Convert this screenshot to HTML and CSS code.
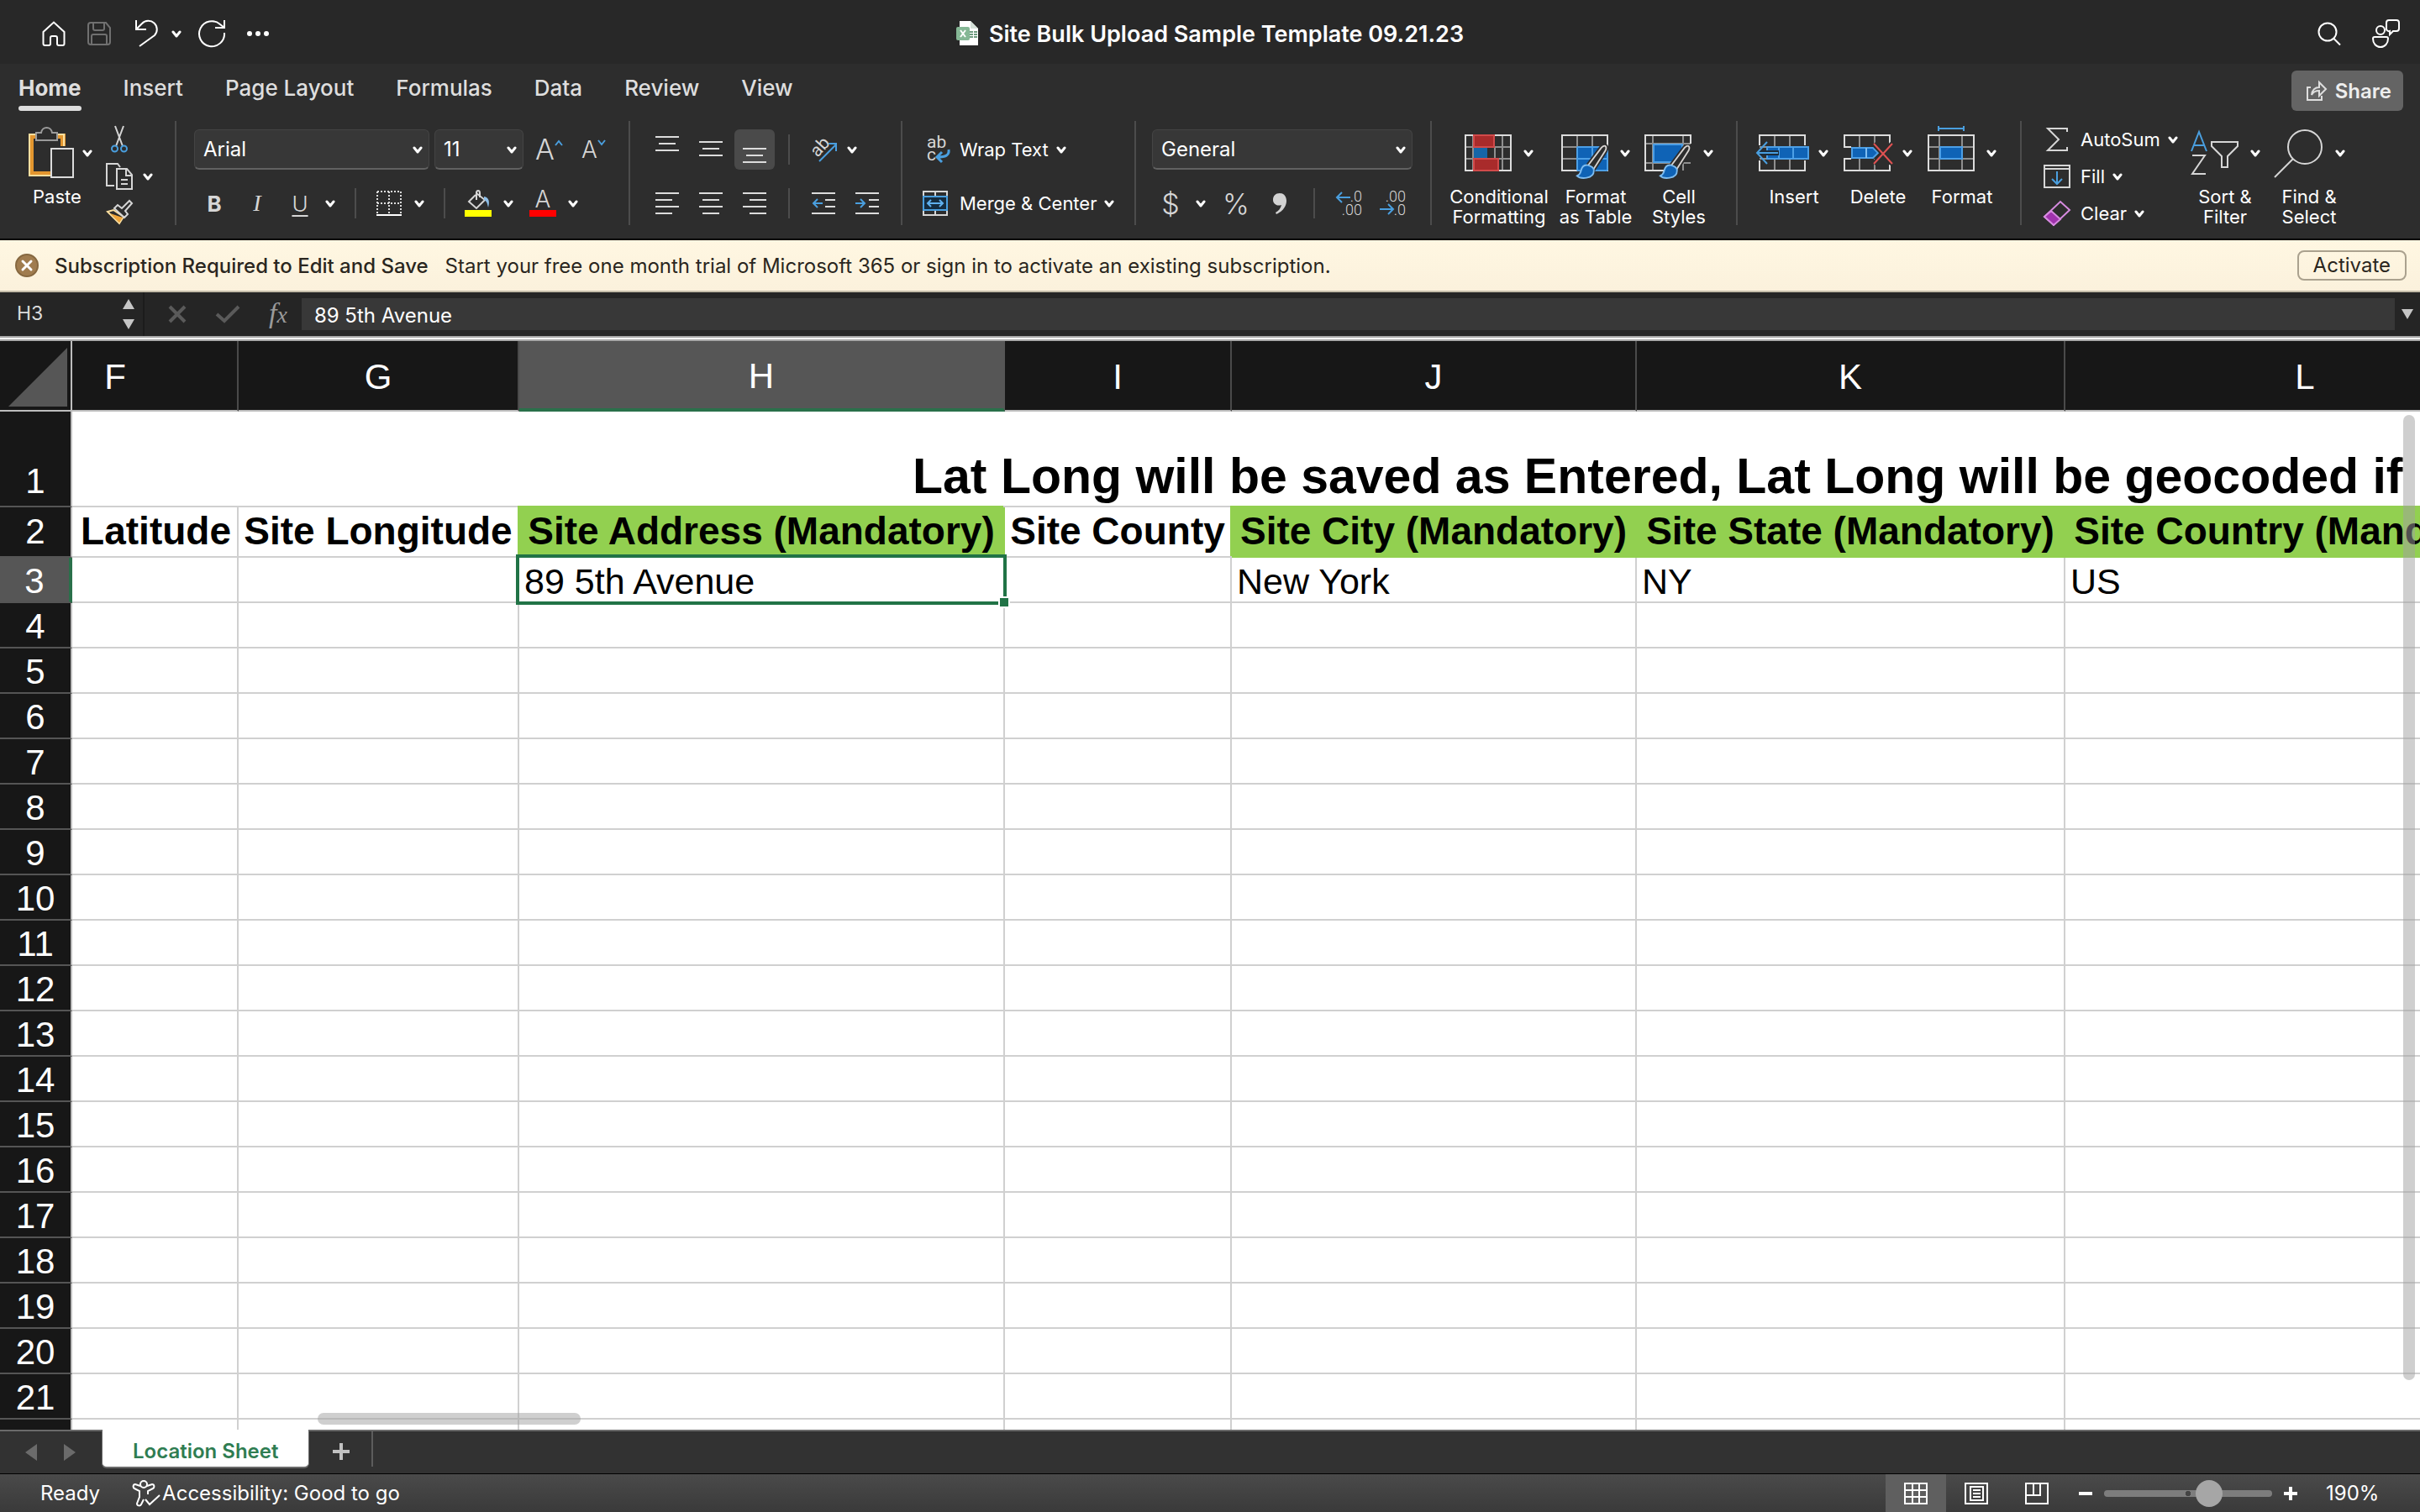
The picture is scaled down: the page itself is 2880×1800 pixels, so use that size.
FILE: index.html
```html
<!DOCTYPE html>
<html lang="en">
<head>
<meta charset="utf-8">
<title>Site Bulk Upload Sample Template 09.21.23</title>
<link rel="stylesheet" href="styles.css">
</head>
<body>
<svg class="defs" aria-hidden="true">
  <symbol id="chev" viewBox="0 0 12 9"><path d="M2 2l4 5 4-5" fill="none" stroke="#fff" stroke-width="3" stroke-linecap="round" stroke-linejoin="round"/></symbol>
  <symbol id="brush" viewBox="0 0 40 46">
    <path d="M37 2c2 2 1 4 0 6L21 33l-7-5L32 4c2-2 3-3 5-2Z" fill="#2d2d2d" stroke="#2d2d2d" stroke-width="6"/>
    <path d="M37 2c2 2 1 4 0 6L21 33l-7-5L32 4c2-2 3-3 5-2Z" fill="#2d2d2d" stroke="#d9d5d2" stroke-width="2"/>
    <path d="M14 27c-6-1-8 3-9 8-1 4-3 5-5 6 4 4 22 5 22-7 0-4-4-6-8-7Z" fill="#0f63b6" stroke="#7fbdf0" stroke-width="2"/>
  </symbol>
</svg>
<div class="app">
  <header class="titlebar">
    <div class="quick">
      <button aria-label="Home"><svg width="28" height="30" fill="none" stroke="#fff" stroke-width="2"><path d="M1.500 13 14 1.500 26.500 13V27a2 2 0 0 1-2 2H20a2 2 0 0 1-2-2v-7a2 2 0 0 0-2-2h-4a2 2 0 0 0-2 2v7a2 2 0 0 1-2 2H3.500a2 2 0 0 1-2-2Z"/></svg></button>
      <button aria-label="Save"><svg width="28" height="28" fill="none" stroke="#707070" stroke-width="2"><path d="M4 1h18l5 6v17a3 3 0 0 1-3 3H4a3 3 0 0 1-3-3V4a3 3 0 0 1 3-3ZM7 1v7a2 2 0 0 0 2 2h9a2 2 0 0 0 2-2V1M5 27V17a2 2 0 0 1 2-2h14a2 2 0 0 1 2 2v10"/></svg></button>
      <button class="undo" aria-label="Undo"><svg width="28" height="32" fill="none" stroke="#fff" stroke-width="2"><path d="M2 0v11h12M2 11l7-7a10 10 0 0 1 15 14L6 31"/></svg><svg class="chev"><use href="#chev"/></svg></button>
      <button class="redo" aria-label="Redo"><svg width="32" height="32" fill="none" stroke="#fff" stroke-width="2"><path d="M31 15a15 15 0 1 1-5-10l5 4M31 0v9H20"/></svg></button>
      <button aria-label="More"><svg width="28" height="8" fill="#fff"><circle cx="3" cy="4" r="3"/><circle cx="13" cy="4" r="3"/><circle cx="23" cy="4" r="3"/></svg></button>
    </div>
    <h1 class="doc"><svg width="27" height="30"><path d="M4 0h13l9 9v20H4Z" fill="#fff"/><path d="M17 0l9 9h-9Z" fill="#d5e0d8"/><path d="M16 12h4v2h-4Zm5 0h4v2h-4Zm-5 3h4v2h-4Zm5 0h4v2h-4Zm-5 3h4v2h-4Zm5 0h4v2h-4Z" fill="#6f9c80"/><rect y="7" width="16" height="16" rx="2" fill="#85b795"/><path d="M5 11l6 8M11 11l-6 8" stroke="#fff" stroke-width="2"/></svg>Site Bulk Upload Sample Template 09.21.23</h1>
    <div class="account">
      <button aria-label="Search"><svg width="28" height="28" fill="none" stroke="#fff" stroke-width="2"><circle cx="12" cy="12" r="10.500"/><path d="M19 19.500l8 8"/></svg></button>
      <button aria-label="Comments"><svg width="34" height="34" fill="none" stroke="#fff" stroke-width="2"><circle cx="11" cy="13" r="5"/><path d="M4 21h14a2 2 0 0 1 2 2c0 6-4 10-9 10s-9-4-9-10a2 2 0 0 1 2-2ZM21 1h9a3 3 0 0 1 3 3v7a3 3 0 0 1-3 3h-4l-4 4v-4a3 3 0 0 1-4-3V4a3 3 0 0 1 3-3Z"/></svg></button>
    </div>
  </header>

  <nav class="tabs">
    <a href="#home" class="on">Home</a><a href="#insert">Insert</a><a href="#layout">Page Layout</a><a href="#formulas">Formulas</a><a href="#data">Data</a><a href="#review">Review</a><a href="#view">View</a>
    <button class="share"><svg width="24" height="24" fill="none" stroke="#dedede" stroke-width="2"><path d="M5 8H1v15h17v-5M6 17c1-7 5-9 9-9V2l8 8-8 8v-6c-4 0-7 1-9 5Z"/></svg>Share</button>
  </nav>

  <div class="ribbon">
    <section class="group clipboard">
      <button class="big paste"><span class="pic"><svg width="54" height="62" fill="none"><path d="M13 11H3v45h23M34 11h7v12" stroke="#e3962f" stroke-width="6"/><path d="M13 9H1v49h25M34 9h8v14" stroke="#fbdf9f" stroke-width="2"/><path d="M9 7h6c1-8 12-8 13 0h6v9H9Z" fill="#2d2d2d" stroke="#9b9b9b" stroke-width="2"/><rect x="27" y="26" width="26" height="34" stroke="#dcdcdc" stroke-width="2" fill="#2d2d2d"/></svg><svg class="chev"><use href="#chev"/></svg></span><span class="name">Paste</span></button>
      <div class="stack">
        <button aria-label="Cut"><svg width="32" height="32" fill="none" stroke="#d6d6d6" stroke-width="2"><path d="M11 0l9 24M21 0l-9 24"/><circle cx="10.500" cy="27" r="3.500" stroke="#4a9fdf"/><circle cx="21.500" cy="27" r="3.500" stroke="#4a9fdf"/></svg></button>
        <button aria-label="Copy"><svg width="32" height="32" fill="none" stroke="#d6d6d6" stroke-width="2"><path d="M10 27H1V1h13l3 4M13 7h12l6 7v17H13ZM24 7v8h7M18 20h8M18 25h8"/></svg><svg class="chev"><use href="#chev"/></svg></button>
        <button aria-label="Format painter"><svg width="32" height="30" fill="none" stroke-width="2"><path d="M2 14l14 14 5-8L9 12Z" stroke="#fbdf9f" fill="#2d2d2d"/><path d="M5 16l11 11 4-6Z" fill="#f0a53a"/><path d="M10 10l4-4 5 4 9-9 3 3-8 9 3 4-4 4Z" stroke="#d6d6d6" fill="#2d2d2d"/></svg></button>
      </div>
    </section>

    <section class="group font">
      <div class="line">
        <span class="pick family"><select aria-label="Font"><option>Arial</option></select><svg class="chev"><use href="#chev"/></svg></span>
        <span class="pick size"><select aria-label="Font size"><option>11</option></select><svg class="chev"><use href="#chev"/></svg></span>
        <button class="grow" aria-label="Increase font size"><span class="a-big">A</span><svg width="10" height="8"><path d="M1 7l4-5 4 5" fill="none" stroke="#4a9fdf" stroke-width="2"/></svg></button>
        <button class="grow" aria-label="Decrease font size"><span class="a-mid">A</span><svg width="10" height="8"><path d="M1 1l4 5 4-5" fill="none" stroke="#4a9fdf" stroke-width="2"/></svg></button>
      </div>
      <div class="line tools">
        <button class="t bold">B</button>
        <button class="t italic">I</button>
        <span class="split"><button class="t under">U</button><svg class="chev"><use href="#chev"/></svg></span>
        <i class="bar"></i>
        <button class="split" aria-label="Borders"><svg width="32" height="32" fill="none" stroke="#dcdcdc" stroke-width="2"><path d="M2 2h28M2 16h28M2 2v26M16 2v26M30 2v26" stroke-dasharray="2 2"/><path d="M1 30h30" stroke="#fff"/></svg><svg class="chev"><use href="#chev"/></svg></button>
        <i class="bar"></i>
        <button class="split" aria-label="Fill color"><svg width="32" height="32" fill="none"><path d="M13 6L5 14l9 8 10-10L14 4v8" stroke="#d6d6d6" stroke-width="2"/><path d="M14 12V4c0-4 4-4 4 0v5" stroke="#d6d6d6" stroke-width="2"/><path d="M23 8c6 1 7 6 5 13-1-5-2-8-5-9Z" fill="#8fc0ea"/><path d="M0 24h32v8H0Z" fill="#ff0"/></svg><svg class="chev"><use href="#chev"/></svg></button>
        <button class="split" aria-label="Font color"><svg width="32" height="32"><text x="16" y="21" text-anchor="middle" class="glyph">A</text><path d="M0 24h32v8H0Z" fill="#f00"/></svg><svg class="chev"><use href="#chev"/></svg></button>
      </div>
    </section>

    <section class="group align">
      <div class="line">
        <button class="sq" aria-label="Top align"><svg width="28" height="32"><path d="M0 1h28M4 9h20M0 17h28" stroke="#dcdcdc" stroke-width="2"/></svg></button>
        <button class="sq" aria-label="Middle align"><svg width="28" height="32"><path d="M0 7h28M4 15h20M0 23h28" stroke="#dcdcdc" stroke-width="2"/></svg></button>
        <button class="sq on" aria-label="Bottom align"><svg width="28" height="32"><path d="M0 15h28M4 23h20M0 31h28" stroke="#dcdcdc" stroke-width="2"/></svg></button>
        <i class="bar"></i>
        <button class="sq" aria-label="Orientation"><svg width="34" height="32" fill="none"><text class="ab" x="0" y="0" transform="translate(10 26) rotate(-48)">ab</text><path d="M12 30L32 10M23 9h9v9" stroke="#4a9fdf" stroke-width="2"/></svg></button><svg class="chev"><use href="#chev"/></svg>
      </div>
      <div class="line">
        <button class="sq" aria-label="Align left"><svg width="28" height="28"><path d="M0 2h28M0 10h20M0 18h28M0 26h20" stroke="#dcdcdc" stroke-width="2"/></svg></button>
        <button class="sq" aria-label="Center"><svg width="28" height="28"><path d="M0 2h28M4 10h20M0 18h28M4 26h20" stroke="#dcdcdc" stroke-width="2"/></svg></button>
        <button class="sq" aria-label="Align right"><svg width="28" height="28"><path d="M0 2h28M8 10h20M0 18h28M8 26h20" stroke="#dcdcdc" stroke-width="2"/></svg></button>
        <i class="bar"></i>
        <button class="sq" aria-label="Decrease indent"><svg width="28" height="28" fill="none" stroke="#dcdcdc" stroke-width="2"><path d="M0 2h28M16 10h12M16 18h12M0 26h28"/><path d="M13 14H2M7 9l-5 5 5 5" stroke="#4a9fdf"/></svg></button>
        <button class="sq" aria-label="Increase indent"><svg width="28" height="28" fill="none" stroke="#dcdcdc" stroke-width="2"><path d="M0 2h28M16 10h12M16 18h12M0 26h28"/><path d="M0 14h11M6 9l5 5-5 5" stroke="#4a9fdf"/></svg></button>
      </div>
    </section>

    <section class="group wrap">
      <button class="line cmd"><svg width="32" height="32" fill="none"><text class="ab"><tspan x="5" y="14">ab</tspan><tspan x="5" y="29">c</tspan></text><path d="M31 16c1 7-4 9-13 9M23 19l-6 6 6 6" stroke="#4a9fdf" stroke-width="3"/></svg>Wrap Text<svg class="chev"><use href="#chev"/></svg></button>
      <button class="line cmd"><svg width="32" height="32" fill="none" stroke-width="2"><path d="M1 2h28v28H1ZM15 2v6M15 24v6" stroke="#d6d6d6"/><path d="M1 8h28v16H1Z" stroke="#4a9fdf" fill="#142c40"/><path d="M6 16h18M10 12l-4 4 4 4M20 12l4 4-4 4" stroke="#5fb0ee"/></svg>Merge &amp; Center<svg class="chev"><use href="#chev"/></svg></button>
    </section>

    <section class="group number">
      <div class="line"><span class="pick format"><select aria-label="Number format"><option>General</option></select><svg class="chev"><use href="#chev"/></svg></span></div>
      <div class="line tools">
        <button class="split"><span class="t sym">$</span><svg class="chev"><use href="#chev"/></svg></button>
        <button class="t sym">%</button>
        <button class="t" aria-label="Comma style"><svg width="16" height="26"><path d="M8 1c5 0 8 4 8 9 0 7-5 13-12 16l-1-2c4-2 6-5 7-9-6 2-10-2-10-6 0-5 3-8 8-8Z" fill="#d2d2d2"/></svg></button>
        <i class="bar"></i>
        <button class="t" aria-label="Increase decimal"><svg width="32" height="32"><text class="dec" x="32" y="14" text-anchor="end">.0</text><text class="dec" x="32" y="30" text-anchor="end">.00</text><path d="M18 9H2M8 3L2 9l6 6" fill="none" stroke="#4a9fdf" stroke-width="2"/></svg></button>
        <button class="t" aria-label="Decrease decimal"><svg width="32" height="32"><text class="dec" x="32" y="14" text-anchor="end">.00</text><text class="dec" x="32" y="30" text-anchor="end">.0</text><path d="M1 23h16M11 17l6 6-6 6" fill="none" stroke="#4a9fdf" stroke-width="2"/></svg></button>
      </div>
    </section>

    <section class="group styles">
      <button class="big wide"><span class="pic"><svg width="56" height="64" fill="none" stroke-width="2"><path d="M1 25h54M1 39h54M10 11v42M45 11v42M36 25v14" stroke="#8f8f8f"/><path d="M1 11h54v42H1Z" stroke="#dcdcdc"/><path d="M11 11h24v14H11ZM11 39h29v14H11Z" fill="#a92b2b" stroke="#d14a4a"/><path d="M11 26h16v12H11Z" fill="#1666a8"/></svg><svg class="chev"><use href="#chev"/></svg></span>Conditional<br>Formatting</button>
      <button class="big"><span class="pic"><svg width="56" height="64" fill="none" stroke-width="2"><path d="M1 25h54M1 39h54M19 11v42M37 11v42" stroke="#8f8f8f"/><path d="M1 11h54v42H1Z" stroke="#dcdcdc"/><path d="M20 26h35v27H20Z" fill="#0f63b6"/><path d="M19 25h36M20 39h35M19 25v28M37 25v28M55 25v28M19 53h36" stroke="#4c9fe6"/><use href="#brush" x="15" y="22" width="44" height="42"/></svg><svg class="chev"><use href="#chev"/></svg></span>Format<br>as Table</button>
      <button class="big"><span class="pic"><svg width="56" height="64" fill="none" stroke-width="2"><path d="M1 21h54M1 44h54M10 11v42M46 11v42" stroke="#8f8f8f"/><path d="M55 21V11H1v42h30" stroke="#dcdcdc"/><path d="M11 22h34v21H11Z" fill="#0f63b6" stroke="#4c9fe6"/><use href="#brush" x="15" y="22" width="44" height="42"/></svg><svg class="chev"><use href="#chev"/></svg></span>Cell<br>Styles</button>
    </section>

    <section class="group cells">
      <button class="big"><span class="pic"><svg width="56" height="64" viewBox="5 0 56 64" fill="none" stroke-width="2"><path d="M5 25h54M5 39h54M23 11v42M41 11v42" stroke="#8f8f8f"/><path d="M5 23V11h54v12M5 41v12h54V41" stroke="#dcdcdc"/><path d="M14 25h49v14H14Z" fill="#0f63b6"/><path d="M14 25h49v14H14ZM28 25v14M45 25v14" stroke="#4c9fe6"/><path d="M27 30v4H5v-4Z" fill="#2d2d2d" stroke="#1c2c3a"/><path d="M27 32H2M14 19L2 32l12 13" stroke="#4a9fdf"/></svg><svg class="chev"><use href="#chev"/></svg></span>Insert</button>
      <button class="big"><span class="pic"><svg width="56" height="64" fill="none" stroke-width="2"><path d="M19 11v14M37 11v14M19 39v14M37 39v14" stroke="#8f8f8f"/><path d="M9 25H1V11h54v10M9 39H1v14h54v-7" stroke="#dcdcdc"/><path d="M10 26h25l6 6-6 6H10Z" fill="#0f63b6" stroke="#4c9fe6"/><path d="M27 26v12" stroke="#7fbdf0"/><path d="M36 21l22 24M58 21L36 45" stroke="#2d2d2d" stroke-width="6"/><path d="M36 21l22 24M58 21L36 45" stroke="#e05252"/></svg><svg class="chev"><use href="#chev"/></svg></span>Delete</button>
      <button class="big"><span class="pic"><svg width="56" height="64" fill="none" stroke-width="2"><path d="M1 25h54M1 39h54M14 11v42M41 11v42" stroke="#8f8f8f"/><path d="M1 11h54v42H1Z" stroke="#dcdcdc"/><path d="M15 25h26v14H15Z" fill="#0f63b6" stroke="#4c9fe6"/><path d="M13 0v6M43 0v6M13 3h30" stroke="#4a9fdf"/></svg><svg class="chev"><use href="#chev"/></svg></span>Format</button>
    </section>

    <section class="group editing">
      <div class="list">
        <button class="cmd"><svg width="32" height="30"><path d="M28 6V2H5l13 13L5 28h23v-4" fill="none" stroke="#d6d6d6" stroke-width="2"/></svg>AutoSum<svg class="chev"><use href="#chev"/></svg></button>
        <button class="cmd"><svg width="32" height="28" fill="none" stroke-width="2"><path d="M1 1h30v26H1ZM1 5h30" stroke="#d6d6d6"/><path d="M16 8v15M10 17l6 6 6-6" stroke="#4a9fdf"/></svg>Fill<svg class="chev"><use href="#chev"/></svg></button>
        <button class="cmd"><svg width="32" height="30" fill="none" stroke-width="2"><path d="M1 19L20 1l11 10-19 18Z" stroke="#d78be0"/><path d="M1 19l8-7 11 10-8 7Z" fill="#a033ad" stroke="#d78be0"/></svg>Clear<svg class="chev"><use href="#chev"/></svg></button>
      </div>
      <button class="big"><span class="pic"><svg width="58" height="64" fill="none" stroke-width="2"><path d="M2 30L11 7l9 23M5 23h12" stroke="#4a9fdf"/><path d="M3 35h15L3 57h16" stroke="#d6d6d6"/><path d="M26 19h31v5L45 36v13h-7V36L26 24Z" stroke="#d6d6d6"/></svg><svg class="chev"><use href="#chev"/></svg></span>Sort &amp;<br>Filter</button>
      <button class="big"><span class="pic"><svg width="60" height="64" fill="none" stroke="#d6d6d6" stroke-width="2"><circle cx="38" cy="25" r="20"/><path d="M24 39L2 61"/></svg><svg class="chev"><use href="#chev"/></svg></span>Find &amp;<br>Select</button>
    </section>
  </div>

  <div class="banner">
    <button aria-label="Dismiss"><svg width="28" height="28"><circle cx="14" cy="14" r="13" fill="#a07c4f" stroke="#866840" stroke-width="2"/><path d="M9 9l10 10M19 9L9 19" stroke="#fff" stroke-width="3" stroke-linecap="round"/></svg></button>
    <strong>Subscription Required to Edit and Save</strong>
    <span>Start your free one month trial of Microsoft 365 or sign in to activate an existing subscription.</span>
    <button class="activate">Activate</button>
  </div>

  <div class="formula">
    <input class="cellref" aria-label="Name box" value="H3">
    <svg class="step" width="16" height="38" fill="#c6c6c6"><path d="M8 1l7 12H1ZM8 37l7-12H1Z"/></svg>
    <div class="fx">
      <svg width="22" height="22"><path d="M2 2l18 18M20 2L2 20" stroke="#5a5a5a" stroke-width="4"/></svg>
      <svg width="30" height="22"><path d="M2 11l9 8L28 2" fill="none" stroke="#5a5a5a" stroke-width="4"/></svg>
      <span class="fn"><i>f</i><i class="x">x</i></span>
    </div>
    <input class="content" aria-label="Formula" value="89 5th Avenue">
    <svg width="16" height="14" fill="#c6c6c6"><path d="M1 1h14L8 13Z"/></svg>
  </div>

  <main class="sheet">
    <table>
      <colgroup><col class="c0"><col class="cf"><col class="cg"><col class="ch"><col class="ci"><col class="cj"><col class="ck"><col class="cl"></colgroup>
      <thead><tr><th class="corner"><svg width="72" height="70"><path d="M70 0v70H0Z" fill="#565656"/></svg></th><th class="first">F</th><th>G</th><th class="cur">H</th><th>I</th><th>J</th><th>K</th><th>L</th></tr></thead>
      <tbody>
        <tr class="r1"><th>1</th><td class="note" colspan="7">Lat Long will be saved as Entered, Lat Long will be geocoded if</td></tr>
        <tr class="r2"><th>2</th><td class="cut">Latitude</td><td>Site Longitude</td><td class="req">Site Address (Mandatory)</td><td>Site County</td><td class="req">Site City (Mandatory)</td><td class="req">Site State (Mandatory)</td><td class="req">Site Country (Mandatory)</td></tr>
        <tr><th class="cur">3</th><td></td><td></td><td class="active">89 5th Avenue<span class="frame"></span></td><td></td><td>New York</td><td>NY</td><td>US</td></tr>
        <tr><th>4</th><td></td><td></td><td></td><td></td><td></td><td></td><td></td></tr>
        <tr><th>5</th><td></td><td></td><td></td><td></td><td></td><td></td><td></td></tr>
        <tr><th>6</th><td></td><td></td><td></td><td></td><td></td><td></td><td></td></tr>
        <tr><th>7</th><td></td><td></td><td></td><td></td><td></td><td></td><td></td></tr>
        <tr><th>8</th><td></td><td></td><td></td><td></td><td></td><td></td><td></td></tr>
        <tr><th>9</th><td></td><td></td><td></td><td></td><td></td><td></td><td></td></tr>
        <tr><th>10</th><td></td><td></td><td></td><td></td><td></td><td></td><td></td></tr>
        <tr><th>11</th><td></td><td></td><td></td><td></td><td></td><td></td><td></td></tr>
        <tr><th>12</th><td></td><td></td><td></td><td></td><td></td><td></td><td></td></tr>
        <tr><th>13</th><td></td><td></td><td></td><td></td><td></td><td></td><td></td></tr>
        <tr><th>14</th><td></td><td></td><td></td><td></td><td></td><td></td><td></td></tr>
        <tr><th>15</th><td></td><td></td><td></td><td></td><td></td><td></td><td></td></tr>
        <tr><th>16</th><td></td><td></td><td></td><td></td><td></td><td></td><td></td></tr>
        <tr><th>17</th><td></td><td></td><td></td><td></td><td></td><td></td><td></td></tr>
        <tr><th>18</th><td></td><td></td><td></td><td></td><td></td><td></td><td></td></tr>
        <tr><th>19</th><td></td><td></td><td></td><td></td><td></td><td></td><td></td></tr>
        <tr><th>20</th><td></td><td></td><td></td><td></td><td></td><td></td><td></td></tr>
        <tr><th>21</th><td></td><td></td><td></td><td></td><td></td><td></td><td></td></tr>
        <tr><th>22</th><td></td><td></td><td></td><td></td><td></td><td></td><td></td></tr>
      </tbody>
    </table>
    <div class="scroll-v"></div>
    <div class="scroll-h"></div>
  </main>

  <div class="sheetbar">
    <button class="arrows" aria-label="Scroll sheets"><svg width="62" height="22" fill="#6b6b6b"><path d="M15 1v20L1 11ZM47 1v20l14-10Z"/></svg></button>
    <button class="sheettab">Location Sheet</button>
    <button class="add" aria-label="Add sheet"><svg width="20" height="20"><path d="M10 0v20M0 10h20" stroke="#c2c2c2" stroke-width="4"/></svg></button>
  </div>

  <footer class="status">
    <span>Ready</span>
    <button class="a11y"><svg width="34" height="32" fill="none" stroke="#fff" stroke-width="2"><circle cx="14" cy="5" r="4"/><path d="M10 7L4 5C1 5 1 9 3 10l6 3v7l-3 8c0 3 4 3 5 1l3-6M18 7l6-2c3 0 3 4 1 5l-6 3v4M16 23l5 6L33 18"/></svg>Accessibility: Good to go</button>
    <div class="views">
      <button class="on" aria-label="Normal view"><svg width="28" height="28" fill="none" stroke="#fff" stroke-width="2"><path d="M1 2h26v24H1ZM1 10h26M1 18h26M10 2v24M18 2v24"/></svg></button>
      <button aria-label="Page layout view"><svg width="28" height="28" fill="none" stroke="#fff" stroke-width="2"><path d="M1 2h26v24H1ZM7 6h15v16H7ZM10 10h9M10 14h9M10 18h9"/></svg></button>
      <button aria-label="Page break view"><svg width="28" height="28" fill="none" stroke="#fff" stroke-width="2"><path d="M1 2h26v24H1ZM1 16h17V2M10 2v14"/></svg></button>
    </div>
    <div class="zoom">
      <button aria-label="Zoom out"><svg width="16" height="16"><path d="M0 8h16" stroke="#fff" stroke-width="4"/></svg></button>
      <input type="range" aria-label="Zoom" min="0" max="100" value="65">
      <button aria-label="Zoom in"><svg width="16" height="16"><path d="M0 8h16M8 0v16" stroke="#fff" stroke-width="4"/></svg></button>
      <span>190%</span>
    </div>
  </footer>
</div>
</body>
</html>
```
FILE: styles.css
```css
* { box-sizing: border-box; }
body { margin: 0; background: #2d2d2d; color: #fff; font-family: Inter, "Liberation Sans", sans-serif; font-size: 24px; }
button { display: flex; align-items: center; padding: 0; border: 0; background: none; color: inherit; font: inherit; white-space: nowrap; }
svg { display: block; flex: none; overflow: visible; }
.defs { position: absolute; width: 0; height: 0; }
.chev { width: 12px; height: 9px; }
.app { display: flex; flex-direction: column; height: 100vh; overflow: hidden; }

/* title bar */
.titlebar { display: grid; grid-template-columns: 1fr auto 1fr; align-items: center; flex: none; height: 76px; padding: 4px 24px 0; background: #282828; }
.quick { display: flex; align-items: center; gap: 26px; padding-left: 26px; }
.undo { gap: 16px; margin-left: 2px; }
.redo { margin-left: -6px; }
.doc { display: flex; align-items: center; gap: 12px; margin: 0; font-size: 27px; font-weight: 600; }
.account { display: flex; align-items: center; justify-content: flex-end; gap: 36px; }

/* ribbon tabs */
.tabs { display: flex; align-items: flex-start; gap: 50px; flex: none; height: 60px; padding: 2px 20px 0 22px; font-size: 26px; font-weight: 500; }
.tabs a { padding: 9px 0 3px; color: #dedede; line-height: 36px; text-decoration: none; }
.tabs .on { position: relative; font-weight: 700; }
.tabs .on::after { content: ""; position: absolute; bottom: -6px; left: 0; right: 0; height: 6px; border-radius: 3px; background: #dedede; }
.share { gap: 10px; height: 48px; margin: 6px 0 0 auto; padding: 0 14px 0 18px; border-radius: 6px; background: #646464; color: #ededed; font-weight: 600; font-size: 24px; }

/* ribbon */
.ribbon { display: flex; flex: none; height: 150px; padding: 8px 0 16px; border-bottom: 2px solid #000; font-size: 22px; }
.group { flex: none; border-right: 2px solid #4c4c4c; }
.group:last-child { border-right: 0; }
.line { display: flex; align-items: center; }
.bar { width: 2px; height: 36px; background: #4c4c4c; }
.big { flex-direction: column; width: 84px; padding-top: 6px; gap: 8px; line-height: 24px; text-align: center; align-self: flex-start; }
.big.wide { width: 116px; }
.pic { display: flex; align-items: center; justify-content: center; gap: 14px; height: 64px; }
.cmd { gap: 12px; }
.cmd .chev { margin-left: -3px; }

.clipboard { display: flex; width: 210px; padding-left: 34px; }
.paste { align-items: flex-start; width: 78px; }
.paste .pic { gap: 10px; }
.paste .name { padding-left: 5px; }
.stack { display: flex; flex-direction: column; justify-content: space-between; margin-left: 14px; padding: 6px 0 0; }
.stack button { gap: 12px; }

.font { width: 540px; padding: 10px 0 0 21px; }
.font .line:first-child { gap: 6px; height: 48px; }
.font .tools { gap: 19px; height: 36px; margin-top: 22px; padding-left: 8px; }
.font .bar { margin: 0 4px; }
.pick { display: grid; align-items: center; height: 48px; }
.pick select { grid-area: 1 / 1; width: 100%; height: 48px; padding: 0 10px; border: 1px solid #444; border-bottom: 2px solid #616161; border-radius: 6px; background: #373737; color: #fff; font: inherit; font-size: 24px; appearance: none; }
.pick .chev { grid-area: 1 / 1; justify-self: end; margin-right: 8px; pointer-events: none; }
.family { width: 280px; }
.size { width: 106px; }
.format { width: 310px; }
.grow { align-items: flex-start; width: 49px; padding-left: 8px; color: #d6d6d6; font-weight: 300; line-height: 36px; }
.grow svg { margin-top: 6px; }
.a-big { font-size: 34px; }
.a-mid { font-size: 28px; }
.t { display: flex; align-items: center; justify-content: center; width: 32px; height: 36px; color: #d6d6d6; }
.bold { font-size: 26px; font-weight: 700; }
.italic { font: italic 28px "Liberation Serif", serif; }
.under { font-size: 26px; font-weight: 300; text-decoration: underline; text-decoration-thickness: 2px; text-underline-offset: 4px; }
.sym { font-size: 34px; font-weight: 300; }
.split { display: flex; align-items: center; gap: 14px; }
.glyph { fill: #d6d6d6; font-size: 28px; font-weight: 300; }
.ab { fill: #d6d6d6; font: 21px Roboto, sans-serif; }
.dec { fill: #d6d6d6; font: 300 18px Roboto, sans-serif; }

.align { width: 324px; padding: 10px 0 0 20px; }
.align .line { gap: 4px; height: 48px; }
.align .line + .line { margin-top: 16px; }
.align .bar { margin: 0 12px; }
.sq { justify-content: center; width: 48px; height: 48px; border-radius: 6px; }
.sq.on { background: #4a4a4a; }

.wrap { width: 278px; padding: 10px 0 0 24px; }
.wrap .line { height: 48px; }
.wrap .line + .line { margin-top: 16px; }

.number { width: 352px; padding: 10px 0 0 19px; }
.number .tools { gap: 20px; height: 36px; margin-top: 22px; padding-left: 6px; }
.number .bar { margin: 0 4px; }

.styles { display: flex; gap: 15px; width: 364px; padding-left: 22px; }
.cells { display: flex; gap: 16px; width: 338px; padding-left: 25px; }
.editing { display: flex; gap: 16px; padding-left: 26px; }
.list { display: flex; flex-direction: column; width: 158px; }
.list .cmd { flex: none; height: 44px; }

/* subscription banner */
.banner { display: flex; align-items: center; gap: 19px; flex: none; height: 62px; padding: 0 16px 0 18px; border-bottom: 2px solid #c4bca9; background: linear-gradient(#fff7e2, #fbf1dc); color: #2a2620; font-size: 24px; line-height: 30px; }
.banner strong { margin-right: 1px; padding-top: 2px; font-weight: 500; }
.banner span { padding-top: 2px; }
.activate { height: 36px; margin-left: auto; padding: 0 17px; border: 2px solid #aaa18e; border-radius: 8px; }

/* formula bar */
.formula { display: flex; align-items: center; flex: none; height: 56px; padding: 0 7px 2px 0; border-bottom: 2px solid #f4f4f4; background: #252525; box-shadow: inset 0 -2px #a8a8a8; }
.formula input { border: 0; color: #fff; font: inherit; outline: 0; }
.formula .cellref { width: 145px; padding: 0 0 2px 20px; background: none; color: #dcdcdc; font-size: 23px; }
.fx { display: flex; align-items: center; gap: 34px; height: 52px; margin-left: 9px; padding: 0 17px 0 28px; border-left: 2px solid #1c1c1c; }
.fn { color: #9a9a9a; font: italic 34px/36px "Liberation Serif", serif; }
.fn .x { font-size: 28px; }
.formula .content { flex: 1; height: 38px; padding: 2px 15px 0; margin-right: 7px; background: #383838; font-size: 24px; }

/* grid */
.sheet { position: relative; flex: 1; min-height: 0; overflow: hidden; border-top: 2px solid #a8a8a8; background: #fff; color: #000; font-family: "Liberation Sans", Arial, sans-serif; font-size: 43px; line-height: 48px; }
table { width: 1px; table-layout: fixed; border-spacing: 0; }
.c0 { width: 86px; }
.cf { width: 198px; }
.cg { width: 334px; }
.ch { width: 578px; }
.ci { width: 270px; }
.cj { width: 482px; }
.ck { width: 510px; }
.cl { width: 572px; }
tr { height: 54px; }
th, td { padding: 0; border: 0 solid #d0d0d0; border-width: 0 2px 2px 0; vertical-align: bottom; white-space: nowrap; }
th { border-color: #555; border-right-color: #bdbdbd; background: #171717; color: #fff; font-size: 42px; font-weight: 400; text-align: center; }
td { padding-left: 6px; }
thead tr { height: 84px; }
thead th { padding-top: 4px; border-color: #bdbdbd; border-right-color: #4a4a4a; vertical-align: middle; }
thead .corner { padding: 8px 2px 4px 10px; border-right-color: #bdbdbd; }
thead .first { padding-right: 94px; }
thead .cur { border-right-color: #565656; border-bottom: 4px solid #2a704a; background: #565656; }
tbody .cur { border-right: 4px solid #2a704a; background: #565656; }
.r1 { height: 114px; }
.r1 th, .r2 th { padding-bottom: 5px; }
.note { padding: 0 0 1px 1000px; font-size: 59px; font-weight: 700; line-height: 68px; }
.r2 { height: 60px; }
.r2 td { padding: 0 0 6px; font-size: 46px; font-weight: 700; text-align: center; }
.r2 .cut { padding-right: 7px; text-align: right; }
.r2 .req { border-color: #92d050; background: #92d050; box-shadow: -2px -2px #92d050; }
.active { position: relative; }
.frame { position: absolute; inset: -4px; border: 4px solid #217346; }
.frame::after { content: ""; position: absolute; right: -8px; bottom: -8px; width: 10px; height: 10px; border: 2px solid #fff; background: #217346; }
.scroll-v, .scroll-h { position: absolute; border-radius: 7px; background: rgba(160, 160, 160, .5); }
.scroll-v { top: 88px; right: 6px; bottom: 59px; width: 14px; }
.scroll-h { bottom: 6px; left: 378px; width: 313px; height: 14px; }

/* sheet tabs */
.sheetbar { display: flex; align-items: flex-start; flex: none; height: 53px; border-top: 2px solid #6a6a6a; border-bottom: 1px solid #000; background: #323232; }
.arrows { height: 50px; padding: 0 30px 0 29px; }
.sheettab { position: relative; height: 46px; margin-top: -2px; padding: 6px 36px 0; border: 1px solid #6a6a6a; border-width: 0 1px 2px; border-radius: 0 0 6px 6px; background: #fff; color: #2f7d52; font-weight: 600; }
.add { height: 42px; padding: 6px 26px 0 28px; border-right: 2px solid #5c5c5c; }

/* status bar */
.status { display: flex; align-items: center; flex: none; height: 45px; padding: 0 47px 0 48px; background: linear-gradient(#4a4a4a, #3a3a3a); font-size: 24px; }
.a11y { gap: 2px; margin-left: 38px; }
.views { display: flex; align-self: stretch; margin-left: auto; }
.views button { justify-content: center; width: 72px; }
.views .on { background: #5f5f5f; }
.zoom { display: flex; align-items: center; gap: 14px; margin-left: 14px; }
.zoom span { width: 65px; margin-left: 20px; }
.zoom input { width: 200px; height: 32px; margin: 0; background: none; appearance: none; }
.zoom input::-webkit-slider-runnable-track { height: 8px; border-radius: 4px; background: radial-gradient(circle, #444 3px, #7d7d7d 3px); }
.zoom input::-webkit-slider-thumb { width: 32px; height: 32px; margin-top: -12px; border-radius: 50%; background: #a6a6a6; appearance: none; }
```
